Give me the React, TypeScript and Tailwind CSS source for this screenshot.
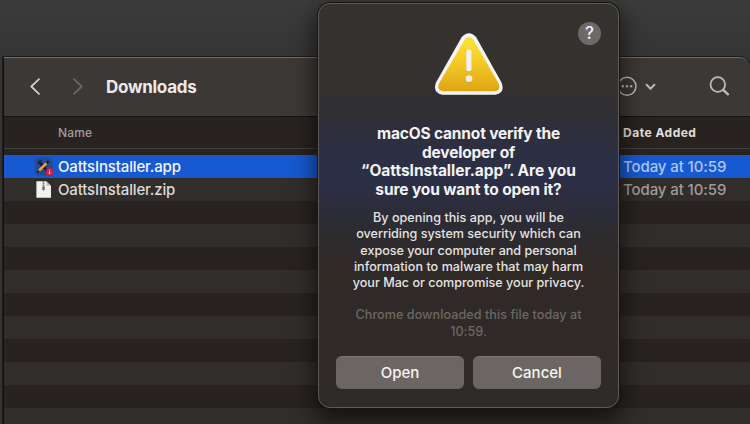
import React from "react";

const files = [
  { name: "OattsInstaller.app", date: "Today at 10:59", selected: true },
  { name: "OattsInstaller.zip", date: "Today at 10:59", selected: false },
];

const title = [
  { text: "macOS cannot verify the", tracking: "tracking-[-0.17px]" },
  { text: "developer of", tracking: "tracking-[-0.2px]" },
  { text: "“OattsInstaller.app”. Are you", tracking: "tracking-[-0.03px]" },
  { text: "sure you want to open it?", tracking: "tracking-[-0.12px]" },
];

const body = [
  { text: "By opening this app, you will be", tracking: "tracking-[0.03px]" },
  { text: "overriding system security which can", tracking: "tracking-[-0.03px]" },
  { text: "expose your computer and personal", tracking: "tracking-[-0.02px]" },
  { text: "information to malware that may harm", tracking: "tracking-[0.03px]" },
  { text: "your Mac or compromise your privacy.", tracking: "tracking-[-0.01px]" },
];

function AppIcon() {
  return (
    <svg width="19" height="19" viewBox="0 0 19 19">
      <rect x="0.5" y="0.5" width="18" height="18" rx="4" fill="#244a9c" />
      <path d="M4.5 4.5L14 14.5" stroke="#15182a" strokeWidth="2.6" />
      <path d="M4 6.5L7 3.5" stroke="#20233a" strokeWidth="2.4" />
      <path d="M4.5 14.2L13.5 5.2" stroke="#f0a63a" strokeWidth="2.5" />
      <path d="M12.4 6.3L14.8 3.9" stroke="#2a1d20" strokeWidth="2.6" />
      <path d="M3.2 15.6L5.2 13.4" stroke="#2a1d20" strokeWidth="1.6" />
      <rect x="12" y="11.2" width="7" height="7.3" rx="2" fill="#c81f3c" />
      <path d="M15.5 12.4V17M13.8 15.3L15.5 17L17.2 15.3" stroke="#f3a3ad" strokeWidth="0.9" fill="none" />
    </svg>
  );
}

function ZipIcon() {
  return (
    <svg width="19" height="19" viewBox="0 0 19 19">
      <path d="M3 1.2H12.2L17 6V17.2Q17 17.8 16.4 17.8H3Q2.4 17.8 2.4 17.2V1.8Q2.4 1.2 3 1.2Z" fill="#f1f1f0" />
      <path d="M12.2 1.2V5.3Q12.2 6 12.9 6H17Z" fill="#c9c9c8" />
      <path d="M9.5 1.2V7" stroke="#777" strokeWidth="1.8" strokeDasharray="1.2 0.6" />
      <rect x="8.4" y="6.4" width="2.3" height="4" rx="0.8" fill="#666" />
    </svg>
  );
}

function WarningIcon() {
  return (
    <svg width="70" height="66" viewBox="0 0 70 66" className="block">
      <defs>
        <linearGradient id="fill" x1="0" y1="0" x2="0" y2="1">
          <stop offset="0" stopColor="#fde43c" />
          <stop offset="0.5" stopColor="#f2c924" />
          <stop offset="1" stopColor="#dfa414" />
        </linearGradient>
      </defs>
      <path d="M27.6 5.2Q35 -2.8 42.2 5.2L67.5 50.5Q71.5 61 61.5 62.8H8.2Q-1.6 61 2 50.5Z" fill="#f6f5f3" />
      <path d="M31 6.9Q35 2.5 39 6.9L64.6 51.6Q67.2 58.6 60.6 59.2H9Q2.4 58.6 5 51.6Z" fill="url(#fill)" />
      <rect x="32.2" y="18.3" width="5.4" height="22" rx="2.5" fill="#b98510" opacity="0.5" />
      <rect x="32.2" y="17.5" width="5.4" height="22" rx="2.5" fill="#f5f2ea" />
      <circle cx="35" cy="47.5" r="3.4" fill="#b98510" opacity="0.5" />
      <circle cx="35" cy="46.7" r="3.4" fill="#f1ede4" />
    </svg>
  );
}

function Dialog() {
  return (
    <section className="absolute left-[318px] top-[3px] flex h-[405px] w-[301px] flex-col items-center rounded-[12px] border border-[#5d5a58] bg-[linear-gradient(180deg,#34322f_0%,#35312f_19%,#302f34_27%,#2d2f42_36%,#2b2f48_43%,#2c2d3c_50%,#2d2b2e_58%,#302a27_66%,#2f2b28_100%)] shadow-[0_0_0_1px_#171615,0_10px_22px_4px_rgba(0,0,0,0.55)]">
      <button className="absolute right-[17px] top-[18px] flex size-[23px] items-center justify-center rounded-full bg-[#6d6967] text-[17px] font-medium leading-none text-[#f2f1f0]">?</button>
      <div className="mt-[28px]">
        <WarningIcon />
      </div>
      <h2 className="mt-[27px] text-center text-[15.5px] font-bold leading-[18.5px] text-[#f3f3f5]">
        {title.map((line) => (
          <span key={line.text} className={`block whitespace-nowrap ${line.tracking}`}>{line.text}</span>
        ))}
      </h2>
      <p className="mt-[11px] text-center text-[12.6px] font-medium leading-[16.25px] text-[#e4e3e2]">
        {body.map((line) => (
          <span key={line.text} className={`block whitespace-nowrap ${line.tracking}`}>{line.text}</span>
        ))}
      </p>
      <p className="mt-[16px] text-center text-[12.6px] font-medium leading-[16.25px] tracking-[0.05px] text-[#6b6764]">
        <span className="block whitespace-nowrap">Chrome downloaded this file today at</span>
        <span className="block">10:59.</span>
      </p>
      <div className="mb-[18px] mt-auto flex w-[265px] gap-[9px]">
        <button className="h-[33px] flex-1 rounded-[6px] border-t border-[#7b7673] bg-[#6b6663] text-[15px] font-medium text-[#f6f5f4]">Open</button>
        <button className="h-[33px] flex-1 rounded-[6px] border-t border-[#7b7673] bg-[#6b6663] text-[15px] font-medium text-[#f6f5f4]">Cancel</button>
      </div>
    </section>
  );
}

export default function App() {
  return (
    <main className="relative h-[424px] w-[750px] overflow-hidden bg-[linear-gradient(180deg,#3b3b3b,#353535_56px,#333)] pl-[3px] pt-[57px] font-['Inter',sans-serif]">
      <div className="h-[367px] overflow-hidden rounded-tr-[11px] border-l border-t border-l-[#121110] border-t-[#716f6c] bg-[#282320] shadow-[0_0_0_1px_#1c1b1a]">
        <header className="flex h-[59px] items-center border-b border-[#151312] bg-[#3c3835]">
          <svg width="100" height="24" viewBox="0 0 100 24" fill="none" strokeWidth="1.8" strokeLinecap="round" strokeLinejoin="round">
            <path d="M35 4.2L27.3 11.5L35 18.8" stroke="#cfccca" />
            <path d="M70 4.2L77.7 11.5L70 18.8" stroke="#6a6663" />
          </svg>
          <h1 className="ml-[2px] text-[17px] font-bold leading-[24px] tracking-[-0.25px] text-[#eceae8]">Downloads</h1>
          <svg className="ml-auto" width="136" height="30" viewBox="0 0 136 30" fill="none" stroke="#bcb8b5">
            <circle cx="13" cy="14.3" r="9" strokeWidth="1.5" />
            <g fill="#bcb8b5" stroke="none">
              <circle cx="8.8" cy="14.3" r="1.2" />
              <circle cx="13" cy="14.3" r="1.2" />
              <circle cx="17.2" cy="14.3" r="1.2" />
            </g>
            <path d="M32.6 12.7L36.5 16.7L40.4 12.7" strokeWidth="2" strokeLinecap="round" strokeLinejoin="round" />
            <circle cx="103.8" cy="12.5" r="7.3" strokeWidth="1.8" />
            <path d="M109.3 18L114 22.3" strokeWidth="2.4" strokeLinecap="round" />
          </svg>
        </header>
        <div className="flex h-[32px] items-center border-b border-[#443f3c] text-[12px] leading-[16px]">
          <span className="ml-[54px] w-[565px] font-medium tracking-[0.15px] text-[#a19d9a]">Name</span>
          <span className="font-bold tracking-[0.5px] text-[#e2e0de]">Date Added</span>
        </div>
        <div className="mt-[6px] h-[276px] bg-[repeating-linear-gradient(180deg,#282320_0,#282320_23px,#312d2a_23px,#312d2a_46px)]">
          {files.map((file) => (
            <div key={file.name} className={`flex h-[23px] items-center text-[15px] leading-[23px] ${file.selected ? "bg-[#1759d1] text-[#f4f6fb]" : "text-[#dddbd9]"}`}>
              <span className="ml-[30px] w-[24px]">{file.selected ? <AppIcon /> : <ZipIcon />}</span>
              <span className="w-[565px] font-medium tracking-[-0.15px]">{file.name}</span>
              <span className={`font-medium tracking-[-0.1px] ${file.selected ? "text-[#aec5ef]" : "text-[#a09c99]"}`}>{file.date}</span>
            </div>
          ))}
        </div>
      </div>
      <Dialog />
    </main>
  );
}
